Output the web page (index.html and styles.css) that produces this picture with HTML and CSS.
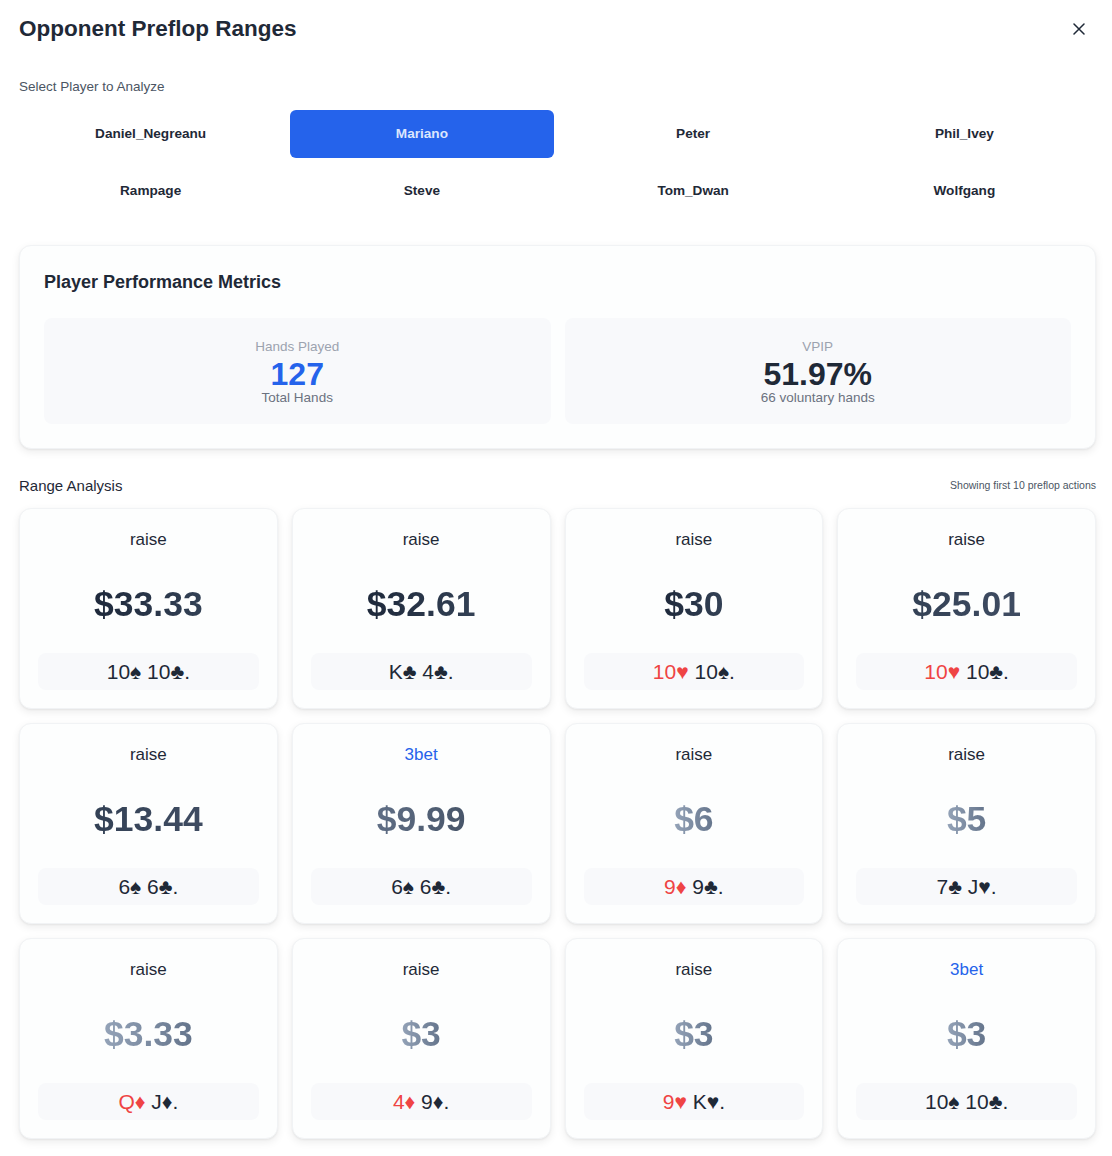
FILE: index.html
```html
<!DOCTYPE html>
<html lang="en">
<head>
<meta charset="utf-8">
<title>Opponent Preflop Ranges</title>
<link rel="stylesheet" href="styles.css">
</head>
<body>
<div class="page">
  <header class="header">
    <h1 class="title">Opponent Preflop Ranges</h1>
    <button class="close" aria-label="Close">
      <svg width="12" height="12" viewBox="0 0 12 12"><path d="M1 1L11 11M11 1L1 11" stroke="#1f2937" stroke-width="1.5" stroke-linecap="round"/></svg>
    </button>
  </header>

  <div class="select-label">Select Player to Analyze</div>
  <div class="players">
    <button class="player">Daniel_Negreanu</button>
    <button class="player active">Mariano</button>
    <button class="player">Peter</button>
    <button class="player">Phil_Ivey</button>
    <button class="player">Rampage</button>
    <button class="player">Steve</button>
    <button class="player">Tom_Dwan</button>
    <button class="player">Wolfgang</button>
  </div>

  <section class="metrics">
    <h2 class="metrics-title">Player Performance Metrics</h2>
    <div class="metrics-grid">
      <div class="metric">
        <div class="metric-label">Hands Played</div>
        <div class="metric-value blue">127</div>
        <div class="metric-sub">Total Hands</div>
      </div>
      <div class="metric">
        <div class="metric-label">VPIP</div>
        <div class="metric-value">51.97%</div>
        <div class="metric-sub">66 voluntary hands</div>
      </div>
    </div>
  </section>

  <div class="range-head">
    <span class="range-title">Range Analysis</span>
    <span class="range-note">Showing first 10 preflop actions</span>
  </div>

  <div class="cards">
    <div class="card"><div class="action">raise</div><div class="amount-wrap"><span class="amount a1">$33.33</span></div><div class="hand">10♠ 10♣.</div></div>
    <div class="card"><div class="action">raise</div><div class="amount-wrap"><span class="amount a1">$32.61</span></div><div class="hand">K♣ 4♣.</div></div>
    <div class="card"><div class="action">raise</div><div class="amount-wrap"><span class="amount a1">$30</span></div><div class="hand"><span class="red">10♥</span> 10♠.</div></div>
    <div class="card"><div class="action">raise</div><div class="amount-wrap"><span class="amount a2">$25.01</span></div><div class="hand"><span class="red">10♥</span> 10♣.</div></div>
    <div class="card"><div class="action">raise</div><div class="amount-wrap"><span class="amount a2">$13.44</span></div><div class="hand">6♠ 6♣.</div></div>
    <div class="card"><div class="action bet">3bet</div><div class="amount-wrap"><span class="amount a3">$9.99</span></div><div class="hand">6♠ 6♣.</div></div>
    <div class="card"><div class="action">raise</div><div class="amount-wrap"><span class="amount a4">$6</span></div><div class="hand"><span class="red">9♦</span> 9♣.</div></div>
    <div class="card"><div class="action">raise</div><div class="amount-wrap"><span class="amount a4">$5</span></div><div class="hand">7♣ J♥.</div></div>
    <div class="card"><div class="action">raise</div><div class="amount-wrap"><span class="amount a4">$3.33</span></div><div class="hand"><span class="red">Q♦</span> J♦.</div></div>
    <div class="card"><div class="action">raise</div><div class="amount-wrap"><span class="amount a4">$3</span></div><div class="hand"><span class="red">4♦</span> 9♦.</div></div>
    <div class="card"><div class="action">raise</div><div class="amount-wrap"><span class="amount a4">$3</span></div><div class="hand"><span class="red">9♥</span> K♥.</div></div>
    <div class="card"><div class="action bet">3bet</div><div class="amount-wrap"><span class="amount a4">$3</span></div><div class="hand">10♠ 10♣.</div></div>
  </div>
</div>
</body>
</html>
```

FILE: styles.css
```css
* { box-sizing: border-box; }
html, body { margin: 0; padding: 0; background: #ffffff; }
body {
  font-family: "Liberation Sans", Arial, sans-serif;
  color: #1f2937;
}
.page {
  padding: 14px 16px 16px 19px;
}
.header {
  display: flex;
  justify-content: space-between;
  align-items: center;
  height: 30px;
}
.title {
  margin: 0;
  font-size: 22.5px;
  font-weight: 700;
  color: #1f2937;
}
.close {
  border: 0;
  background: transparent;
  padding: 0;
  width: 12px;
  height: 12px;
  margin-right: 11px;
  display: flex;
}
.select-label {
  margin-top: 35px;
  font-size: 13.5px;
  color: #4b5563;
  line-height: 16px;
}
.players {
  margin-top: 15px;
  display: grid;
  grid-template-columns: repeat(4, 1fr);
  gap: 9px 8px;
  width: 1077px;
}
.player {
  height: 48px;
  border: 0;
  border-radius: 6px;
  background: transparent;
  font-family: "Liberation Sans", Arial, sans-serif;
  font-weight: 700;
  font-size: 13.6px;
  color: #1f2937;
  padding: 0 0 2px;
}
.player.active {
  background: #2563eb;
  color: #dbe6fd;
}
.metrics {
  margin-top: 30px;
  width: 1077px;
  background: #fdfefe;
  border: 1px solid #f1f3f5;
  border-radius: 12px;
  box-shadow: 0 3px 8px rgba(0,0,0,0.08), 0 1px 2px rgba(0,0,0,0.05);
  padding: 25px 24px 24px 24px;
}
.metrics-title {
  margin: 0;
  font-size: 18px;
  font-weight: 700;
  color: #1f2937;
  line-height: 22px;
}
.metrics-grid {
  margin-top: 25px;
  display: grid;
  grid-template-columns: 1fr 1fr;
  gap: 14px;
}
.metric {
  background: #f8f9fb;
  border-radius: 8px;
  height: 106px;
  display: flex;
  flex-direction: column;
  align-items: center;
  justify-content: center;
  padding-top: 2px;
}
.metric-label {
  font-size: 13.5px;
  color: #9ca3af;
  line-height: 16px;
}
.metric-value {
  font-size: 32px;
  font-weight: 700;
  color: #1f2937;
  line-height: 32px;
  margin-top: 3px;
}
.metric-value.blue { color: #2563eb; }
.metric-sub {
  font-size: 13.5px;
  color: #6b7280;
  line-height: 16px;
}
.range-head {
  margin-top: 27px;
  height: 18px;
  width: 1077px;
  display: flex;
  justify-content: space-between;
  align-items: center;
}
.range-title {
  font-size: 15px;
  color: #1f2937;
}
.range-note {
  font-size: 10.5px;
  color: #4b5563;
}
.cards {
  margin-top: 14px;
  width: 1077px;
  display: grid;
  grid-template-columns: repeat(4, 1fr);
  gap: 14px;
}
.card {
  height: 201px;
  background: #fdfefe;
  border: 1px solid #f1f3f5;
  border-radius: 12px;
  box-shadow: 0 3px 8px rgba(0,0,0,0.08), 0 1px 2px rgba(0,0,0,0.05);
  display: flex;
  flex-direction: column;
  padding: 19px 18px 18px;
}
.action {
  text-align: center;
  font-size: 17px;
  line-height: 24px;
  color: #1f2937;
}
.action.bet { color: #2563eb; }
.amount-wrap {
  flex: 1;
  display: flex;
  align-items: center;
  justify-content: center;
  padding-top: 2px;
}
.amount {
  font-weight: 700;
  font-size: 35.5px;
  line-height: 40px;
  -webkit-background-clip: text;
  background-clip: text;
  color: transparent;
}
.a1 { background-image: linear-gradient(to right, #1e293b, #334155); }
.a2 { background-image: linear-gradient(to right, #334155, #3f4c62); }
.a3 { background-image: linear-gradient(to right, #5f6e85, #475569); }
.a4 { background-image: linear-gradient(to right, #94a3b8, #64748b); }
.hand {
  height: 37px;
  flex: none;
  background: #f8f9fb;
  border-radius: 8px;
  display: flex;
  align-items: center;
  justify-content: center;
  font-size: 21px;
  color: #1f2937;
  white-space: pre;
}
.red { color: #ef4444; white-space: pre; }
```
